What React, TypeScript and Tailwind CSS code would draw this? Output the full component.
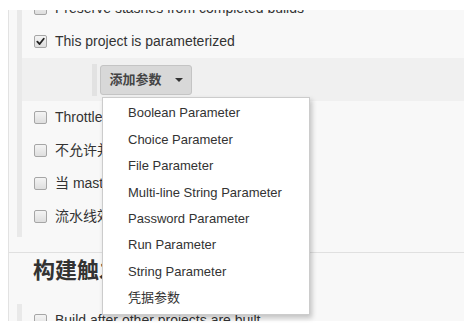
import React from "react";

const font = { fontFamily: '"Liberation Sans", Arial, "Noto Sans CJK SC", sans-serif' };

const Checkbox = ({ checked = false }: { checked?: boolean }) => (
  <span className="inline-flex items-center justify-center w-[13px] h-[13px] shrink-0 rounded-[2px] border border-[#a6a6a6] bg-gradient-to-b from-[#f4f4f4] to-[#dedede]">
    {checked && (
      <svg width="9" height="9" viewBox="0 0 10 10">
        <path d="M1.5 5.2 L4 7.8 L8.6 2" fill="none" stroke="#222" strokeWidth="2" strokeLinecap="round" strokeLinejoin="round" />
      </svg>
    )}
  </span>
);

const Row = ({ label, checked }: { label: string; checked?: boolean }) => (
  <div className="h-[33px] flex items-center pl-[12px] gap-[8px] text-[14px] text-[#333] whitespace-nowrap">
    <Checkbox checked={checked} />
    <span>{label}</span>
  </div>
);

const menuItems = [
  "Boolean Parameter",
  "Choice Parameter",
  "File Parameter",
  "Multi-line String Parameter",
  "Password Parameter",
  "Run Parameter",
  "String Parameter",
  "凭据参数",
];

export default function App() {
  return (
    <div className="relative w-[464px] h-[330px] bg-white pt-[10px] pl-[8px]" style={font}>
      <div className="h-[311px] overflow-hidden bg-[#f8f8f8] border-l border-[#e2e2e2]">
        {/* General options */}
        <div className="ml-[8px] border-l-[5px] border-[#e9e9e9] -mt-[18px] pb-[4px]">
          <Row label="Preserve stashes from completed builds" />
          <Row label="This project is parameterized" checked />

          {/* Parameter area */}
          <div className="h-[43px] bg-[#f0f0f0] flex items-center pl-[70px]">
            <div className="border-l-[5px] border-[#e2e2e2] pl-[3px] py-[1px]">
              <button className="h-[30px] w-[92px] flex items-center justify-center gap-[13px] rounded-[3px] border border-[#c4c4c4] bg-[#d8d8d8] text-[13px] font-bold text-[#444]">
                <span>添加参数</span>
                <span className="w-0 h-0 border-l-[4px] border-r-[4px] border-t-[4px] border-l-transparent border-r-transparent border-t-[#333]" />
              </button>
            </div>
          </div>

          <Row label="Throttle builds" />
          <Row label="不允许并发构建" />
          <Row label="当 master 重启后，不允许恢复流水线" />
          <Row label="流水线效率、持久保存设置覆盖" />
        </div>

        {/* Build triggers */}
        <div className="mt-[15px] border-t border-[#e0e0e0] pt-[2px]">
          <h2 className="h-[30px] flex items-center pl-[24px] text-[22px] font-bold text-[#333]">构建触发器</h2>
          <div className="mt-[19px] ml-[8px] border-l-[5px] border-[#e9e9e9]">
            <Row label="Build after other projects are built" />
          </div>
        </div>
      </div>

      {/* Dropdown menu */}
      <div className="absolute left-[102px] top-[97px] w-[208px] h-[218px] bg-white border border-[#cccccc] shadow-[2px_3px_5px_rgba(0,0,0,0.22)] py-[2px]">
        {menuItems.map((item) => (
          <div key={item} className="h-[26.4px] flex items-center pl-[25px] text-[13px] text-[#333] whitespace-nowrap">
            {item}
          </div>
        ))}
      </div>
    </div>
  );
}
